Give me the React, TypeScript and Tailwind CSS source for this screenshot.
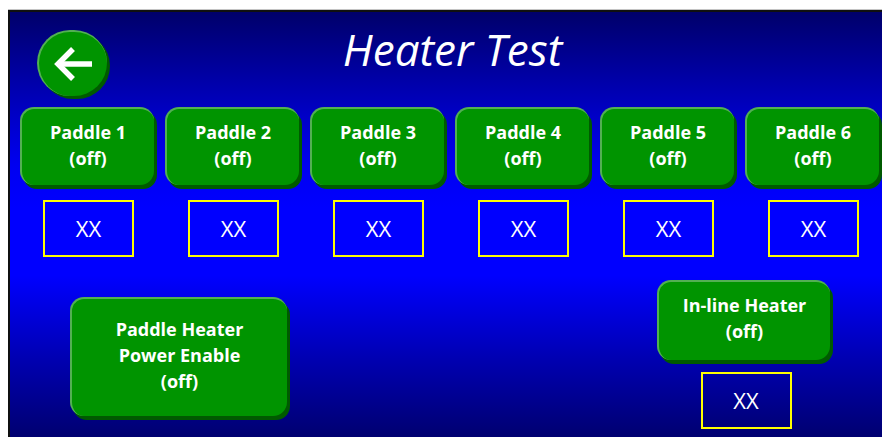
import React from 'react';

const font = { fontFamily: '"Open Sans", "Liberation Sans", sans-serif' };

const paddles = [1, 2, 3, 4, 5, 6];

function GreenButton({ className = '', children }: { className?: string; children: React.ReactNode }) {
  return (
    <div
      className={`flex flex-col items-center justify-center rounded-[14px] border-t-2 border-l-2 border-[#52b052] bg-[#009400] text-[18px] font-bold leading-[26px] text-white shadow-[3px_4px_0_#005a00] ${className}`}
    >
      {children}
    </div>
  );
}

function ValueBox() {
  return (
    <div className="flex h-[57px] w-[91px] items-center justify-center border-2 border-[#ffff00] text-[22px] text-white">
      XX
    </div>
  );
}

export default function App() {
  return (
    <div className="min-h-[437px] bg-white pl-[8px] pt-[9px]" style={font}>
      <div className="border-t border-[#c4c4c4]">
        <div className="h-[427px] overflow-hidden border-l-2 border-t-2 border-[#101010] bg-[linear-gradient(to_bottom,#00006a_0%,#0000a8_16%,#0000f0_36%,#0000ff_46%,#0000ff_62%,#0000b0_82%,#000070_100%)]">
          {/* Header */}
          <div className="flex h-[95px] items-start">
            <div className="ml-[27px] mt-[18px] flex h-[66px] w-[70px] items-center justify-center rounded-full border-t-2 border-l-2 border-[#52b052] bg-[#009400] shadow-[3px_3px_0_#005a00]">
              <svg width="40" height="36" viewBox="0 0 40 36" fill="none" stroke="white" strokeWidth="5.5" strokeLinejoin="miter">
                <path d="M5 18H39" />
                <path d="M20 3L5 18L20 33" />
              </svg>
            </div>
            <h1 className="mt-[11px] flex-1 pr-[84px] text-center text-[44px] italic leading-[52px] text-white">
              Heater Test
            </h1>
          </div>

          {/* Paddles */}
          <div className="flex gap-[11px] pl-[10px]">
            {paddles.map((n) => (
              <div key={n} className="flex w-[134px] shrink-0 flex-col items-center">
                <GreenButton className="h-[78px] w-[134px] pb-[4px]">
                  <span>Paddle {n}</span>
                  <span>(off)</span>
                </GreenButton>
                <div className="ml-[3px] mt-[15px]">
                  <ValueBox />
                </div>
              </div>
            ))}
          </div>

          {/* Bottom row */}
          <div className="mt-[23px] flex items-start">
            <GreenButton className="ml-[60px] mt-[17px] h-[119px] w-[217px] pb-[6px]">
              <span>Paddle Heater</span>
              <span>Power Enable</span>
              <span>(off)</span>
            </GreenButton>
            <div className="ml-[370px] flex w-[176px] flex-col items-center">
              <GreenButton className="h-[80px] w-[173px] self-start pb-[6px]">
                <span>In-line Heater</span>
                <span>(off)</span>
              </GreenButton>
              <div className="ml-[2px] mt-[12px]">
                <ValueBox />
              </div>
            </div>
          </div>
        </div>
      </div>
    </div>
  );
}
